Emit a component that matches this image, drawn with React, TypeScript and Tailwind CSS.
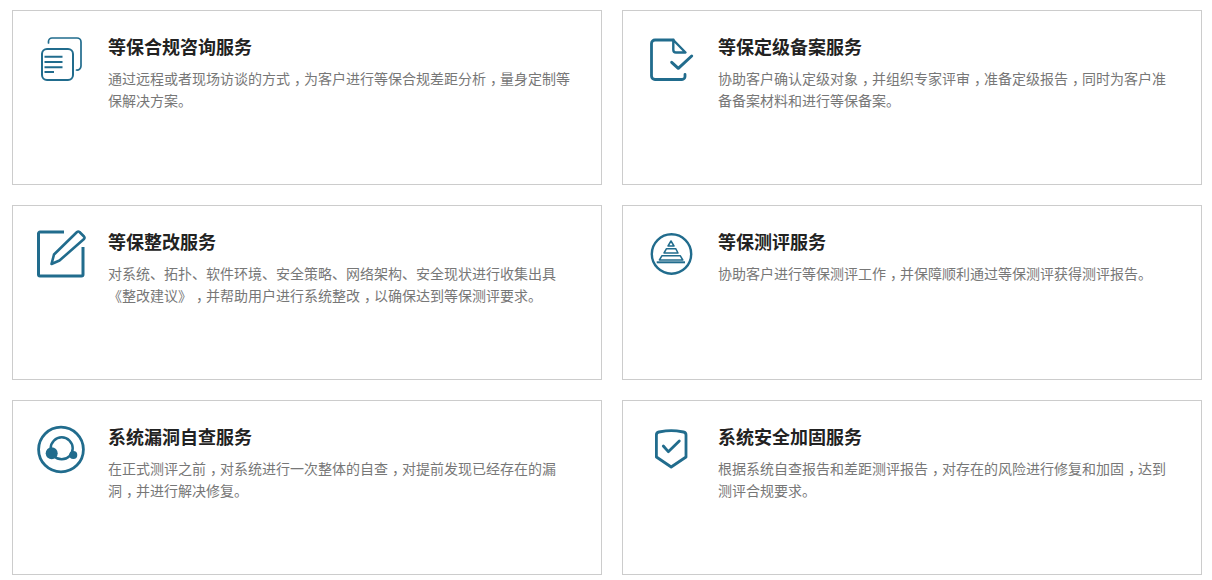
import { Fragment } from "react";

const INK = "#216c8d";

const IconDocs = () => (
  <svg width="44" height="46" viewBox="0 0 44 46" fill="none" stroke={INK} strokeLinecap="round" strokeLinejoin="round" aria-hidden>
    <path d="M8.500 7V5.500a3.500 3.500 0 0 1 3.500-3.500h25a4 4 0 0 1 4 4v24a4 4 0 0 1-4.500 4" strokeWidth="1.700" />
    <rect x="2" y="13" width="31" height="31" rx="5" strokeWidth="2" />
    <path d="M4.500 20.700h18M4.500 26h18M4.500 31.300h18M4.500 36h9.500" strokeWidth="2" strokeLinecap="butt" />
  </svg>
);

const IconFileCheck = () => (
  <svg width="45" height="44" viewBox="0 0 45 44" fill="none" stroke={INK} strokeLinecap="round" strokeLinejoin="round" aria-hidden>
    <path d="M24.300 3H6a3.500 3.500 0 0 0-3.500 3.500V39A3.500 3.500 0 0 0 6 42.500h27a3 3 0 0 0 3-3V37.500" strokeWidth="2.800" />
    <path d="M24.300 3l12.200 12.500H27a2.700 2.700 0 0 1-2.700-2.700z" strokeWidth="2.400" />
    <path d="M22.700 25.300l6.600 6L42.700 19" strokeWidth="3" />
  </svg>
);

const IconEdit = () => (
  <svg width="50" height="50" viewBox="0 0 50 50" fill="none" stroke={INK} aria-hidden>
    <path d="M28 3H4a1.500 1.500 0 0 0-1.500 1.500v41A1.500 1.500 0 0 0 4 47h41.500a1.500 1.500 0 0 0 1.500-1.500V18" strokeWidth="3" />
    <path d="M18 25.500L41 3a2 2 0 0 1 2.500 0L48 7.500a2 2 0 0 1 0 2.500L23.500 31.500l-8 3.500z" strokeWidth="2.600" strokeLinejoin="round" />
  </svg>
);

const IconPyramid = () => (
  <svg width="44" height="42" viewBox="0 0 44 42" fill="none" stroke={INK} aria-hidden>
    <circle cx="21.500" cy="21" r="19.700" strokeWidth="2.400" />
    <path d="M21 8l3 5h-6zM16.500 15.700h9.200l2.300 4.300H14zM12 22.700h18.200l2.600 4.300H9.400z" strokeWidth="1.500" strokeLinejoin="round" />
    <path d="M6.700 29.300H35" strokeWidth="2" />
  </svg>
);

const IconHeadset = () => (
  <svg width="50" height="50" viewBox="0 0 50 50" fill="none" aria-hidden>
    <circle cx="25" cy="25.500" r="22.400" stroke={INK} strokeWidth="2.800" />
    <circle cx="25.700" cy="24.300" r="11" stroke={INK} strokeWidth="2.500" />
    <circle cx="15.700" cy="29.300" r="6" fill={INK} />
    <circle cx="37.300" cy="31" r="4" fill={INK} />
  </svg>
);

const IconShield = () => (
  <svg width="35" height="42" viewBox="0 0 35 42" fill="none" stroke={INK} strokeLinecap="round" strokeLinejoin="round" aria-hidden>
    <path d="M2.400 7a3 3 0 0 1 2.500-3C9 3.300 13 2.700 17.200 2.700S25.500 3.300 29.500 4A3 3 0 0 1 32 7v22L17.200 39 2.400 29z" strokeWidth="2.800" />
    <path d="M9.300 18l5 5.700 11-10.700" strokeWidth="2.800" />
  </svg>
);

const services = [
  {
    title: "等保合规咨询服务",
    lines: ["通过远程或者现场访谈的方式，为客户进行等保合规差距分析，量身定制等", "保解决方案。"],
    icon: <IconDocs />,
    iconClass: "pl-[27px] pt-[25px]",
  },
  {
    title: "等保定级备案服务",
    lines: ["协助客户确认定级对象，并组织专家评审，准备定级报告，同时为客户准", "备备案材料和进行等保备案。"],
    icon: <IconFileCheck />,
    iconClass: "pl-[26px] pt-[26px]",
  },
  {
    title: "等保整改服务",
    lines: ["对系统、拓扑、软件环境、安全策略、网络架构、安全现状进行收集出具", "《整改建议》，并帮助用户进行系统整改，以确保达到等保测评要求。"],
    icon: <IconEdit />,
    iconClass: "pl-[23px] pt-[23px]",
  },
  {
    title: "等保测评服务",
    lines: ["协助客户进行等保测评工作，并保障顺利通过等保测评获得测评报告。"],
    icon: <IconPyramid />,
    iconClass: "pl-[27px] pt-[27px]",
  },
  {
    title: "系统漏洞自查服务",
    lines: ["在正式测评之前，对系统进行一次整体的自查，对提前发现已经存在的漏", "洞，并进行解决修复。"],
    icon: <IconHeadset />,
    iconClass: "pl-[23px] pt-[23px]",
  },
  {
    title: "系统安全加固服务",
    lines: ["根据系统自查报告和差距测评报告，对存在的风险进行修复和加固，达到", "测评合规要求。"],
    icon: <IconShield />,
    iconClass: "pl-[31px] pt-[27px]",
  },
];

// The commas sit in the middle of their cell in the screenshot's font.
function DescLine({ text }: { text: string }) {
  const parts = text.split("，");
  return (
    <p className="whitespace-nowrap">
      {parts.map((part, i) => (
        <Fragment key={i}>
          {part}
          {i < parts.length - 1 && <span className="ml-[4px] tracking-[-4px]">，</span>}
        </Fragment>
      ))}
    </p>
  );
}

export default function App() {
  return (
    <div className="min-h-[580px] bg-white pl-[12px] pr-[10px] pt-[10px] font-['Noto_Sans_CJK_SC',sans-serif]">
      <div className="grid grid-cols-[590px_580px] gap-[20px]">
        {services.map((s) => (
          <div key={s.title} className="flex h-[175px] border border-[#ccc] bg-white">
            <div className={`w-[95px] shrink-0 ${s.iconClass}`}>{s.icon}</div>
            <div className="min-w-0 flex-1 pr-[23px] pt-[21px]">
              <h3 className="text-[18px] font-bold leading-[28px] text-[#222]">{s.title}</h3>
              <div className="mt-[7px] text-[14px] leading-[22px] text-[#777] [text-spacing-trim:space-all]">
                {s.lines.map((line) => (
                  <DescLine key={line} text={line} />
                ))}
              </div>
            </div>
          </div>
        ))}
      </div>
    </div>
  );
}
